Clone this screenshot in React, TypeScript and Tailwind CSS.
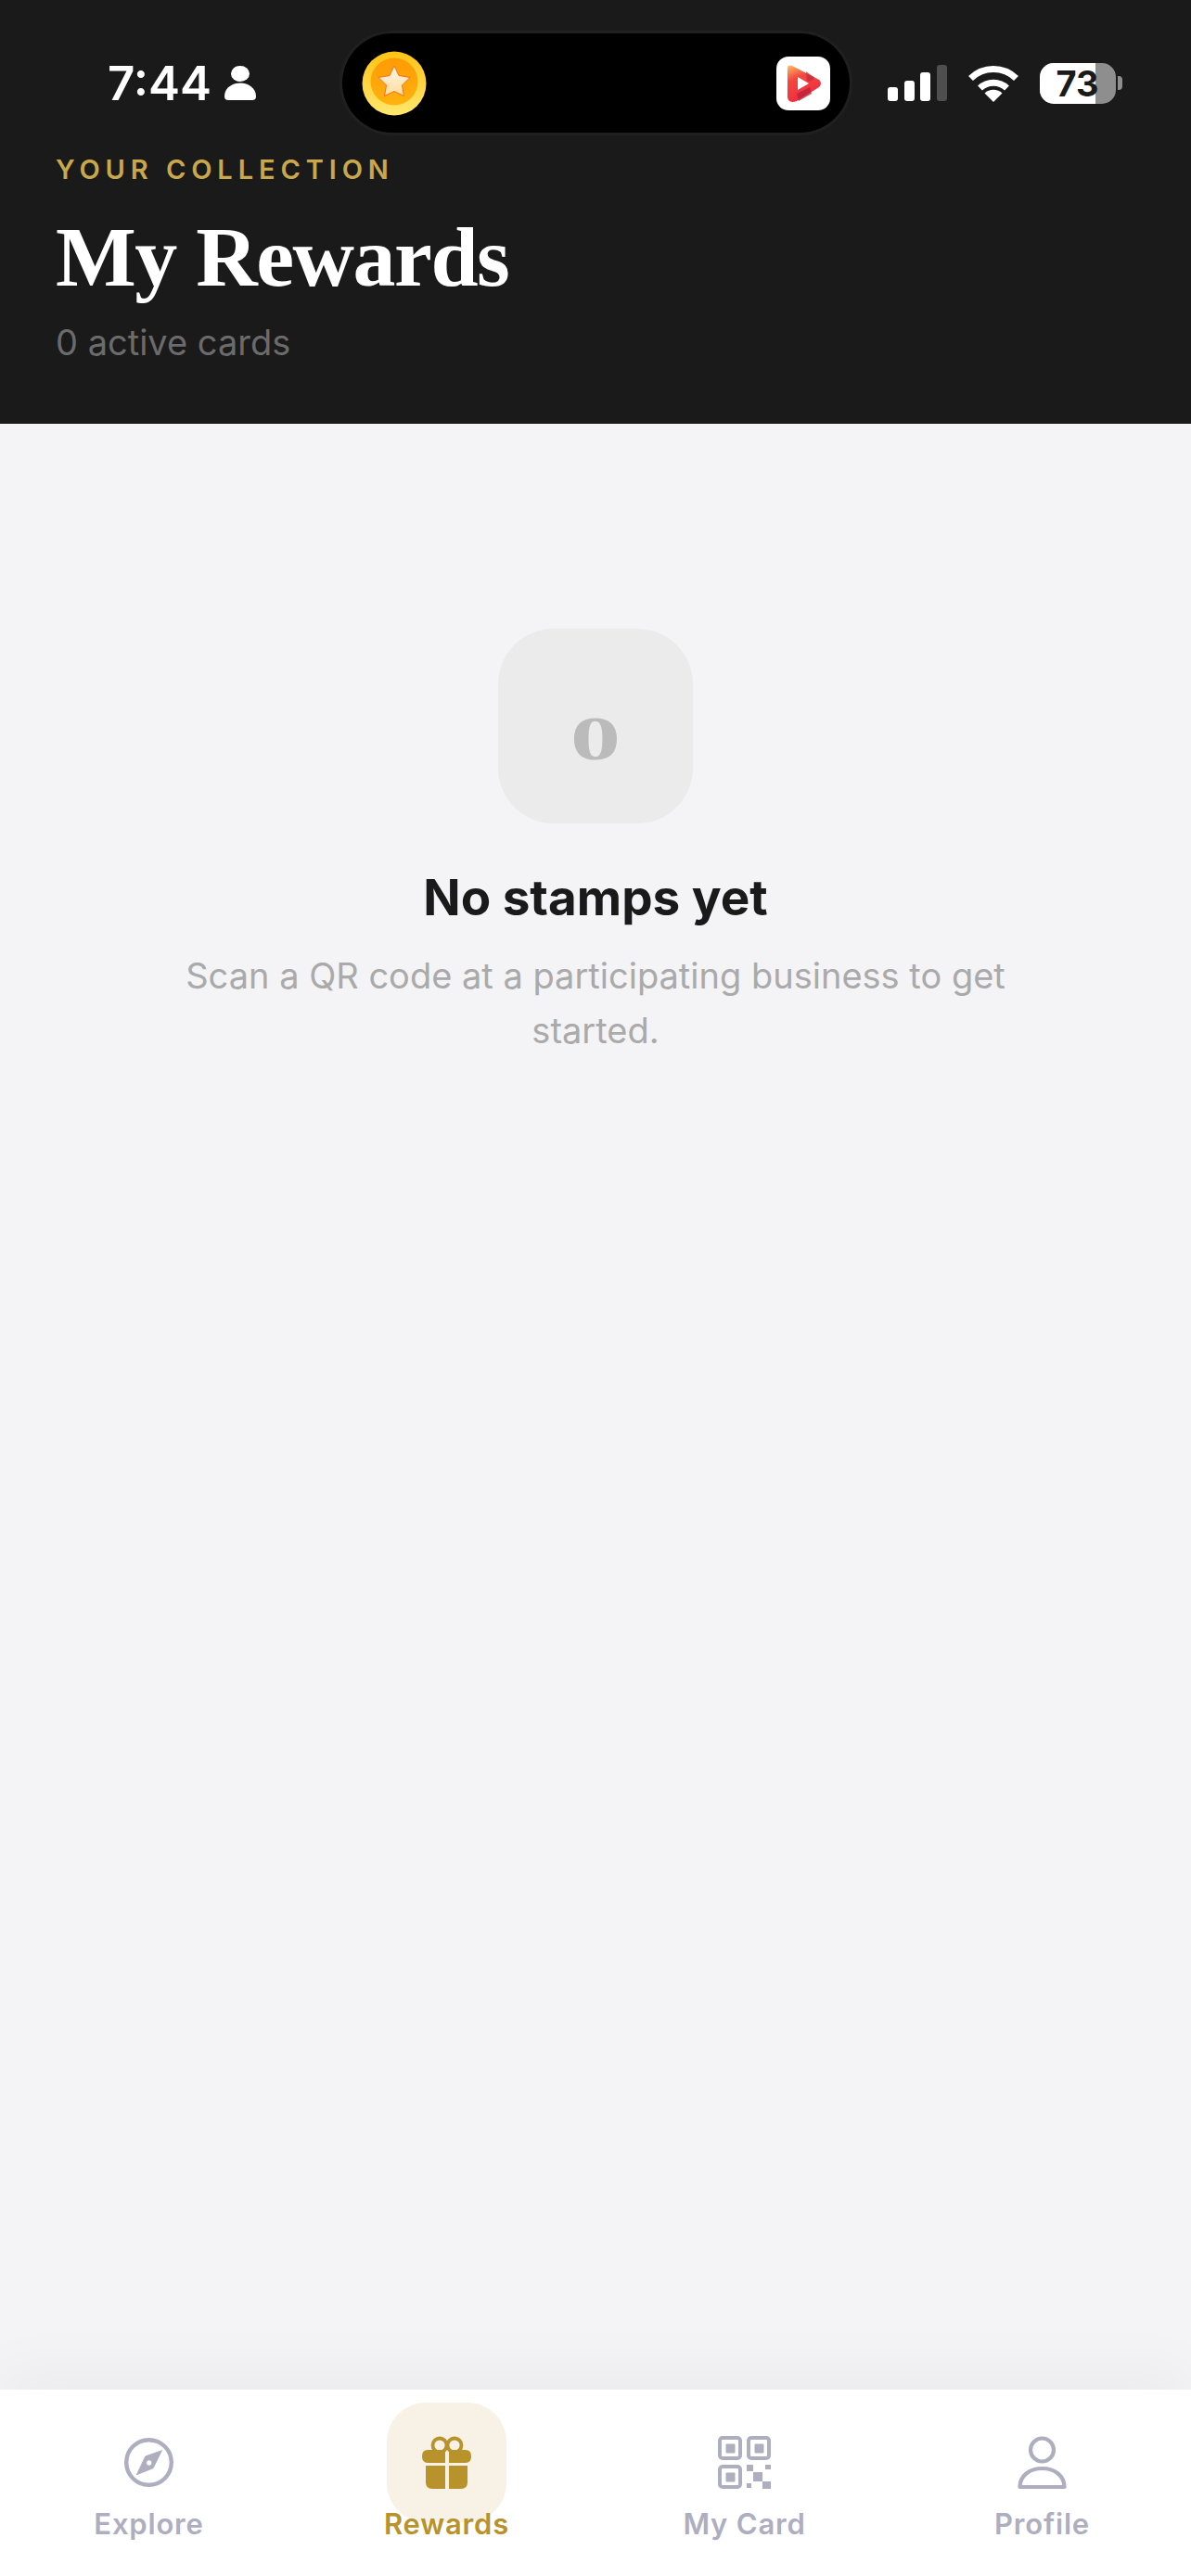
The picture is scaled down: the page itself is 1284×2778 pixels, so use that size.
const inter = 'font-["Inter",sans-serif]'

function PersonGlyph() {
	return (
		<svg width="34" height="37" viewBox="0 0 34 37" fill="#fff">
			<ellipse cx="17" cy="8.5" rx="10" ry="8.5" />
			<path d="M0 33C0 24 8 18.500 17 18.500S34 24 34 33C34 36 32 37 30 37H4C2 37 0 36 0 33Z" />
		</svg>
	)
}

function CoinIcon() {
	return (
		<svg width="70" height="70" viewBox="0 0 70 70">
			<defs>
				<linearGradient id="coinRim" x1="0" y1="0" x2="0" y2="1">
					<stop offset="0" stopColor="#ffc313" />
					<stop offset="1" stopColor="#ffe76f" />
				</linearGradient>
				<linearGradient id="coinFace" x1="0" y1="0" x2="0" y2="1">
					<stop offset="0" stopColor="#ff9a06" />
					<stop offset="1" stopColor="#ffb30e" />
				</linearGradient>
				<linearGradient id="coinStar" x1="0" y1="0" x2="0" y2="1">
					<stop offset="0" stopColor="#fff6e6" />
					<stop offset="1" stopColor="#ffdc9c" />
				</linearGradient>
			</defs>
			<circle cx="35" cy="35" r="34.500" fill="url(#coinRim)" />
			<circle cx="35" cy="33" r="25.500" fill="url(#coinFace)" />
			<path
				d="M35 16L40 26.500L52 28.500L43.500 37L45.500 48.500L35 43.500L24.500 48.500L26.500 37L18 28.500L30 26.500Z"
				fill="url(#coinStar)"
				stroke="#ff6a1a"
				strokeWidth="1"
				strokeLinejoin="round"
			/>
		</svg>
	)
}

function PlayApp() {
	return (
		<div className="flex h-[58px] w-[58px] items-center justify-center rounded-[13px] bg-white">
			<svg width="58" height="58" viewBox="0 0 58 58">
				<defs>
					<linearGradient id="playFill" x1="0.1" y1="0" x2="0.5" y2="1">
						<stop offset="0" stopColor="#ffb45e" />
						<stop offset="0.35" stopColor="#f4473f" />
						<stop offset="1" stopColor="#ee2b3f" />
					</linearGradient>
				</defs>
				<path d="M12 13Q12 8 17 10L46 25Q50 29 46 33L22 48Q13 51 12 44Z" fill="url(#playFill)" />
				<path d="M32 16L41 22.500Q38 28 33 26Z" fill="#c02a3d" opacity="0.7" />
				<path d="M22 40L36 33L38 40L24 48Z" fill="#b9233a" opacity="0.75" />
				<path d="M23 22L35 29L23 36Z" fill="#fff" />
			</svg>
		</div>
	)
}

function SignalBars() {
	const bars = [
		{ height: 'h-[15px]', color: 'bg-white' },
		{ height: 'h-[22px]', color: 'bg-white' },
		{ height: 'h-[31px]', color: 'bg-white' },
		{ height: 'h-[39px]', color: 'bg-[#4f4f4f]' }
	]
	return (
		<div className="flex h-[39px] items-end gap-[6.500px]">
			{bars.map((bar, i) => (
				<div className={`w-[11px] rounded-[3px] ${bar.height} ${bar.color}`} key={i} />
			))}
		</div>
	)
}

function WifiGlyph() {
	return (
		<svg width="56" height="41" viewBox="0 0 56 41" fill="none" stroke="#fff">
			<path d="M3.500 15.500A35 35 0 0 1 52.500 15.500" strokeWidth="7" />
			<path d="M13.500 26A21 21 0 0 1 42.500 26" strokeWidth="7" />
			<path d="M28 41L18.500 31.500A14 14 0 0 1 37.500 31.500Z" fill="#fff" stroke="none" />
		</svg>
	)
}

function Battery() {
	return (
		<div className="flex items-center gap-[2px]">
			<div className="relative flex h-[44px] w-[82px] items-center justify-center overflow-hidden rounded-[15px] bg-[#8e8e8e]">
				<div className="absolute inset-y-0 left-0 w-[60px] bg-white" />
				<span className={`relative ${inter} text-[38px] leading-none font-bold text-[#1a1a1a]`}>73</span>
			</div>
			<div className="h-[15px] w-[5px] rounded-r-[4px] bg-[#8e8e8e]" />
		</div>
	)
}

function StatusBar() {
	return (
		<div className="flex h-[107px] items-center">
			<div className="flex w-[369px] items-center gap-[14px] pl-[116px]">
				<span className={`${inter} text-[51px] leading-none font-semibold text-white`}>7:44</span>
				<PersonGlyph />
			</div>
			<div className="flex h-[107px] w-[547px] items-center justify-between rounded-[54px] bg-black pr-[21px] pl-[21px] shadow-[0_0_0_3px_#202020]">
				<CoinIcon />
				<PlayApp />
			</div>
			<div className="flex items-center pl-[41px]">
				<SignalBars />
				<div className="ml-[22px]">
					<WifiGlyph />
				</div>
				<div className="ml-[22px]">
					<Battery />
				</div>
			</div>
		</div>
	)
}

function CompassIcon() {
	return (
		<svg width="54" height="54" viewBox="0 0 54 54" fill="none">
			<circle cx="26.500" cy="26.500" r="24.300" stroke="#aeaec0" strokeWidth="4.400" />
			<path
				fillRule="evenodd"
				d="M40.400 13.700L22.800 20L13.400 39.700L31 32.700ZM26.800 23.800A3.200 3.200 0 1 0 26.800 30.200A3.200 3.200 0 1 0 26.800 23.800Z"
				fill="#aeaec0"
				stroke="#aeaec0"
				strokeWidth="1"
				strokeLinejoin="round"
			/>
		</svg>
	)
}

function GiftIcon() {
	return (
		<svg width="54" height="58" viewBox="0 0 54 58" fill="#b8922a">
			<circle cx="19" cy="10" r="7.500" fill="none" stroke="#b8922a" strokeWidth="3.800" />
			<circle cx="35" cy="10" r="7.500" fill="none" stroke="#b8922a" strokeWidth="3.800" />
			<path d="M25 15H6Q0 15 0 22Q0 29 6 29H25Z" />
			<path d="M29 15H47Q53 15 53 22Q53 29 47 29H29Z" />
			<path d="M4 32H25V57H11Q4 57 4 50Z" />
			<path d="M29 32H49V50Q49 57 42 57H29Z" />
		</svg>
	)
}

function QrIcon() {
	const small = [
		'M31 31h7v7h-7z',
		'M51 31h6v5h-6z',
		'M38 39h10v10h-10z',
		'M31 51h5v5h-5z',
		'M48 49h9v8h-9z'
	]
	return (
		<svg width="58" height="58" viewBox="0 0 58 58" fill="#aeaec0">
			<rect x="2" y="2" width="22" height="22" rx="3" fill="none" stroke="#aeaec0" strokeWidth="4" />
			<rect x="33" y="2" width="22" height="22" rx="3" fill="none" stroke="#aeaec0" strokeWidth="4" />
			<rect x="2" y="33" width="22" height="22" rx="3" fill="none" stroke="#aeaec0" strokeWidth="4" />
			<rect x="8.500" y="8.500" width="10" height="10" rx="1" />
			<rect x="39.500" y="8.500" width="10" height="10" rx="1" />
			<rect x="8.500" y="39.500" width="10" height="10" rx="1" />
			{small.map((d) => (
				<path d={d} key={d} />
			))}
		</svg>
	)
}

function ProfileIcon() {
	return (
		<svg width="54" height="58" viewBox="0 0 54 58" fill="none" stroke="#aeaec0" strokeWidth="4.200">
			<circle cx="26.500" cy="15" r="12.500" />
			<path d="M2.500 55C2.500 43 13 35 26.500 35S50.500 43 50.500 55Z" strokeLinejoin="round" />
		</svg>
	)
}

const tabs = [
	{ label: 'Explore', icon: <CompassIcon />, active: false },
	{ label: 'Rewards', icon: <GiftIcon />, active: true },
	{ label: 'My Card', icon: <QrIcon />, active: false },
	{ label: 'Profile', icon: <ProfileIcon />, active: false }
]

function BottomNav() {
	return (
		<nav className="grid h-[201px] grid-cols-4 bg-white shadow-[0_-20px_60px_rgba(0,0,0,0.04)]">
			{tabs.map((tab) => (
				<div className="relative flex flex-col items-center pt-[50px]" key={tab.label}>
					{tab.active && <div className="absolute top-[14px] h-[129px] w-[129px] rounded-[42px] bg-[#f7f2e5]" />}
					<div className="relative flex h-[58px] items-center justify-center">{tab.icon}</div>
					<span
						className={`relative mt-[19px] ${inter} text-[31px] leading-[36px] font-semibold tracking-[0.8px] ${
							tab.active ? 'text-[#b8922a]' : 'text-[#aeaec0]'
						}`}
					>
						{tab.label}
					</span>
				</div>
			))}
		</nav>
	)
}

export default function App() {
	return (
		<div className="flex h-[2778px] w-[1284px] flex-col overflow-hidden bg-[#f4f4f6]">
			<header className="h-[457px] bg-[#1a1a1a] pt-[36px]">
				<StatusBar />
				<div className="px-[60px] pt-[22px]">
					<p className={`${inter} text-[29px] leading-[36px] font-semibold tracking-[5.900px] text-[#c9a84c]`}>
						YOUR COLLECTION
					</p>
					<h1 className='mt-[26px] font-["Liberation_Serif",serif] text-[92px] leading-[100px] font-bold tracking-[-1.500px] text-white'>
						My Rewards
					</h1>
					<p className={`mt-[18px] ${inter} text-[38px] leading-[48px] text-[#6b6b6b]`}>0 active cards</p>
				</div>
			</header>
			<main className="flex flex-1 flex-col items-center pt-[221px]">
				<div className="flex h-[210px] w-[210px] items-center justify-center rounded-[60px] bg-[#ebebeb] pt-[26px]">
					<span className='scale-x-[1.6] font-["Liberation_Serif",serif] text-[68px] leading-none font-bold text-[#bbbbbb]'>
						0
					</span>
				</div>
				<h2 className={`mt-[46px] ${inter} text-[53px] leading-[68px] font-bold text-[#1a1a1a]`}>No stamps yet</h2>
				<p className={`mt-[21px] w-[960px] text-center ${inter} text-[38px] leading-[59px] text-[#aaaaaa]`}>
					Scan a QR code at a participating business to get started.
				</p>
			</main>
			<BottomNav />
		</div>
	)
}
